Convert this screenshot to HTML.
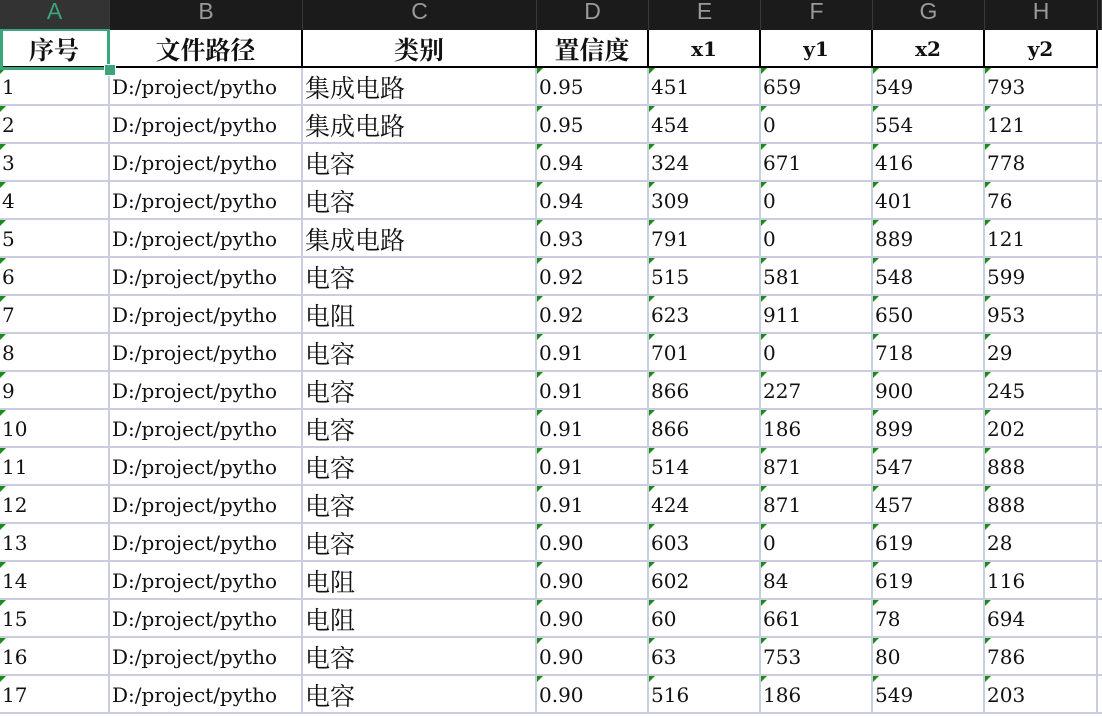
<!DOCTYPE html><html><head><meta charset="utf-8"><style>
body{margin:0;width:1102px;height:718px;overflow:hidden;background:#fff;position:relative;font-family:"DejaVu Serif","Noto Serif CJK SC",serif}
.hd{position:absolute;top:0;height:30px;background:#1b1b1b;color:#9a9a9a;font-family:"Liberation Sans",sans-serif;font-size:23px;text-align:center;line-height:22px;border-right:1px solid #3a3a3a;box-sizing:border-box}
.c{position:absolute;box-sizing:border-box;border-right:2px solid #c8cde0;border-bottom:2px solid #c8cde0;font-size:20px;line-height:38px;padding-left:2px;white-space:nowrap;overflow:hidden;color:#111}
.k{font-family:"Noto Serif CJK SC",serif;font-size:25px}
.h{font-weight:bold;text-align:center;border-right:2px solid #000;border-bottom:2px solid #000;line-height:38px;padding:0}
.t::before{content:"";position:absolute;left:0;top:0;border-top:6px solid #1a8a1a;border-right:6px solid transparent}
</style></head><body>
<div id="g"></div>
<script>
var xs=[0,110,303,537,649,761,873,985,1098];
var L="ABCDEFGH";var h="";
for(var i=0;i<8;i++){h+='<div class="hd" style="left:'+xs[i]+'px;width:'+(xs[i+1]-xs[i])+'px;'+(i==0?'background:#333;color:#3aa57a;':'')+'">'+L[i]+'</div>';}
h+='<div class="hd" style="left:1098px;width:4px"></div>';
var hdr=['<span class="k">序号</span>','<span class="k">文件路径</span>','<span class="k">类别</span>','<span class="k">置信度</span>',"x1","y1","x2","y2"];
for(var i=0;i<8;i++){h+='<div class="c h" style="left:'+xs[i]+'px;top:30px;width:'+(xs[i+1]-xs[i])+'px;height:38px;">'+hdr[i]+'</div>';}
var d=[["集成电路","0.95",451,659,549,793],["集成电路","0.95",454,0,554,121],["电容","0.94",324,671,416,778],["电容","0.94",309,0,401,76],["集成电路","0.93",791,0,889,121],["电容","0.92",515,581,548,599],["电阻","0.92",623,911,650,953],["电容","0.91",701,0,718,29],["电容","0.91",866,227,900,245],["电容","0.91",866,186,899,202],["电容","0.91",514,871,547,888],["电容","0.91",424,871,457,888],["电容","0.90",603,0,619,28],["电阻","0.90",602,84,619,116],["电阻","0.90",60,661,78,694],["电容","0.90",63,753,80,786],["电容","0.90",516,186,549,203]];
for(var r=0;r<17;r++){var y=68+r*38;var row=[r+1,"D:/project/pytho",'<span class="k">'+d[r][0]+'</span>'].concat(d[r].slice(1));
for(var i=0;i<8;i++){var t=(i==0||i>=3)?' t':'';h+='<div class="c'+t+'" style="left:'+xs[i]+'px;top:'+y+'px;width:'+(xs[i+1]-xs[i])+'px;height:38px">'+row[i]+'</div>';}
h+='<div class="c" style="left:1098px;top:'+y+'px;width:10px;height:38px"></div>';}
document.getElementById("g").innerHTML=h;
</script>
<div style="position:absolute;left:0;top:29px;width:110px;height:41px;box-sizing:border-box;border:3px solid #3aa57a;border-top:2px solid #3aa57a"></div>
<div style="position:absolute;left:104px;top:64px;width:10px;height:10px;background:#3aa57a;border:1px solid #fff"></div>
</body></html>
